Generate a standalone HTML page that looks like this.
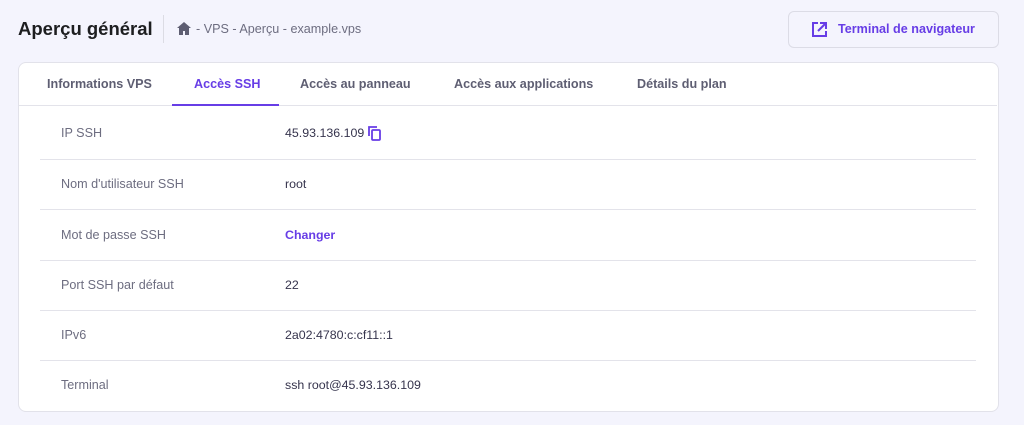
<!DOCTYPE html><html><head><style>
body{margin:0;width:1024px;height:425px;background:#f4f4fd;font-family:"Liberation Sans",sans-serif;position:relative;overflow:hidden}
.a{position:absolute;white-space:nowrap}
.card{position:absolute;left:18px;top:62px;width:979px;height:348px;background:#fff;border:1px solid #e2e2ea;border-radius:8px}
.tab{position:absolute;top:77px;font-size:12.6px;font-weight:bold;color:#5e5e72}
.lab{position:absolute;left:61px;font-size:12.6px;color:#6d6d80}
.val{position:absolute;left:285px;font-size:12.4px;color:#36344d}
.sep{position:absolute;left:40px;width:936px;height:1px;background:#e3e3ea}
</style></head><body>
<div class="a" style="left:18px;top:18px;font-size:18.5px;font-weight:bold;color:#1d1e20">Aperçu général</div>
<div class="a" style="left:163px;top:15px;width:1px;height:28px;background:#dcdce4"></div>
<svg class="a" style="left:177px;top:22px" width="14" height="13" viewBox="0 0 14 13"><path d="M7 0L0 6h2v7h4V9h2v4h4V6h2z" fill="#5e5e72"/></svg>
<div class="a" style="left:196px;top:22px;font-size:12.6px;color:#6d6d80">- VPS - Aperçu - example.vps</div>
<div class="a" style="left:788px;top:11px;width:209px;height:35px;border:1px solid #dcdce6;border-radius:6px;background:#f4f4fd"></div>
<svg class="a" style="left:811px;top:21px" width="17" height="17" viewBox="0 0 17 17"><path d="M7 2H2v13h13v-5M9 2h6v6M15 2L7 10" fill="none" stroke="#673de6" stroke-width="2"/></svg>
<div class="a" style="left:838px;top:22px;font-size:12.6px;font-weight:bold;color:#673de6">Terminal de navigateur</div>
<div class="card"></div>
<div class="tab" style="left:47px">Informations VPS</div>
<div class="tab" style="left:194px;color:#673de6">Accès SSH</div>
<div class="tab" style="left:300px">Accès au panneau</div>
<div class="tab" style="left:454px">Accès aux applications</div>
<div class="tab" style="left:637px">Détails du plan</div>
<div class="a" style="left:19px;top:105px;width:978px;height:1px;background:#e3e3ea"></div>
<div class="a" style="left:172px;top:104px;width:107px;height:2px;background:#673de6"></div>
<div class="lab" style="top:126px">IP SSH</div><div class="val" style="top:126px">45.93.136.109</div>
<svg class="a" style="left:367px;top:125px" width="15" height="16" viewBox="0 0 15 16"><path d="M2 11V2h8" fill="none" stroke="#673de6" stroke-width="1.8"/><rect x="5" y="5" width="8" height="10" rx="1" fill="none" stroke="#673de6" stroke-width="1.8"/></svg>
<div class="sep" style="top:159px"></div>
<div class="lab" style="top:177px">Nom d'utilisateur SSH</div><div class="val" style="top:177px">root</div>
<div class="sep" style="top:209px"></div>
<div class="lab" style="top:228px">Mot de passe SSH</div><div class="val" style="top:228px;color:#673de6;font-weight:bold">Changer</div>
<div class="sep" style="top:260px"></div>
<div class="lab" style="top:278px">Port SSH par défaut</div><div class="val" style="top:278px">22</div>
<div class="sep" style="top:310px"></div>
<div class="lab" style="top:328px">IPv6</div><div class="val" style="top:328px">2a02:4780:c:cf11::1</div>
<div class="sep" style="top:360px"></div>
<div class="lab" style="top:378px">Terminal</div><div class="val" style="top:378px">ssh root@45.93.136.109</div>
</body></html>
